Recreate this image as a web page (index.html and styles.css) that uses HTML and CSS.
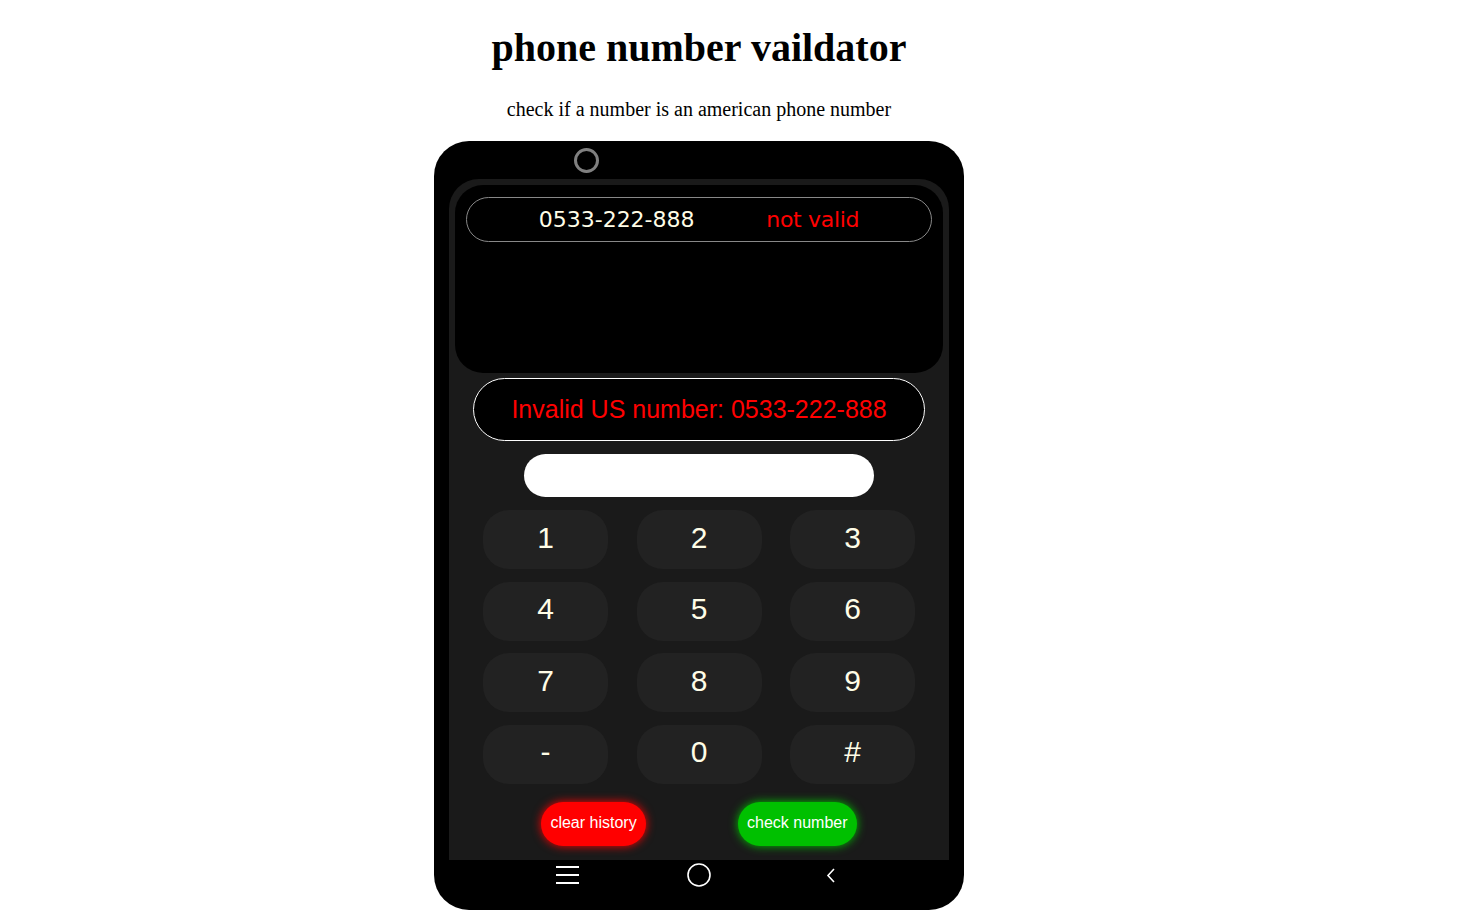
FILE: index.html
```html
<!DOCTYPE html>
<html lang="en">
<head>
    <link rel="stylesheet" href="styles.css">
</head>
<body>
    <div class="page">
        <h1>phone number vaildator</h1>
        <p class="subtitle">check if a number is an american phone number</p>

        <div class="phone">
            <div class="phone-top">
                <span class="camera"></span>
            </div>
            <div class="screen">
                <div class="history">
                    <div class="entry">
                        <span class="entry-num">0533-222-888</span>
                        <span class="entry-status">not valid</span>
                    </div>
                </div>
                <div class="result">Invalid US number: 0533-222-888</div>
                <input type="text" class="number-input" id="numberInput">
                <div class="keypad">
                    <button class="key">1</button>
                    <button class="key">2</button>
                    <button class="key">3</button>
                    <button class="key">4</button>
                    <button class="key">5</button>
                    <button class="key">6</button>
                    <button class="key">7</button>
                    <button class="key">8</button>
                    <button class="key">9</button>
                    <button class="key">-</button>
                    <button class="key">0</button>
                    <button class="key">#</button>
                </div>
                <div class="actions">
                    <button class="btn btn-clear">clear history</button>
                    <button class="btn btn-check">check number</button>
                </div>
            </div>
            <div class="nav-bar">
                <span class="nav-item">
                    <svg width="23" height="18" viewBox="0 0 23 18">
                        <path d="M0 1H23M0 9H23M0 17H23" stroke="#fff" stroke-width="2"/>
                    </svg>
                </span>
                <span class="nav-item">
                    <svg width="24" height="24" viewBox="0 0 24 24">
                        <circle cx="12" cy="12" r="11" fill="none" stroke="#fff" stroke-width="1.6"/>
                    </svg>
                </span>
                <span class="nav-item">
                    <svg width="10" height="15" viewBox="0 0 10 15">
                        <polyline points="8,1 2,7.5 8,14" fill="none" stroke="#fff" stroke-width="1.6"/>
                    </svg>
                </span>
            </div>
        </div>
    </div>
</body>
</html>
```

FILE: styles.css
```css
body {
    margin: 0;
    font-family: "Liberation Serif", "Times New Roman", serif;
    background-color: #fff;
}
.page {
    width: 1398px;
    text-align: center;
}
h1 {
    font-size: 40px;
    line-height: 46px;
    margin: 25px 0 0;
}
.subtitle {
    font-size: 20px;
    line-height: 23px;
    margin: 27px 0 0;
}
.phone {
    width: 530px;
    height: 769px;
    margin: 20px auto 0;
    padding: 0 15px;
    box-sizing: border-box;
    background-color: #000;
    border-radius: 35px;
    overflow: hidden;
}
.phone-top {
    height: 38px;
    display: flex;
    align-items: center;
    padding-left: 125px;
}
.camera {
    width: 25px;
    height: 25px;
    box-sizing: border-box;
    border: 3px solid #808080;
    border-radius: 50%;
}
.screen {
    height: 681px;
    box-sizing: border-box;
    padding: 6px;
    background-color: #1a1a1a;
    border-radius: 30px 30px 0 0;
    display: flex;
    flex-direction: column;
    align-items: center;
}
.history {
    width: 100%;
    height: 188px;
    box-sizing: border-box;
    padding: 12px 11px 0;
    background-color: #000;
    border-radius: 28px;
}
.entry {
    height: 45px;
    box-sizing: border-box;
    border: 1px solid #888;
    border-radius: 23px;
    display: flex;
    align-items: center;
    justify-content: space-evenly;
    font-family: "DejaVu Sans", Verdana, sans-serif;
}
.entry-num {
    font-size: 22px;
    color: #fffde7;
}
.entry-status {
    font-size: 22px;
    letter-spacing: -0.3px;
    color: #ff0000;
}
.result {
    width: 452px;
    height: 63px;
    margin-top: 5px;
    box-sizing: border-box;
    border: 1px solid #fff;
    border-radius: 32px;
    background-color: #000;
    color: #ff0000;
    font-family: "Liberation Sans", Arial, sans-serif;
    font-size: 25px;
    display: flex;
    align-items: center;
    justify-content: center;
}
.number-input {
    display: block;
    width: 350px;
    height: 43px;
    margin-top: 13px;
    box-sizing: border-box;
    border: none;
    border-radius: 22px;
    background-color: #fff;
    outline: none;
}
.keypad {
    margin-top: 13px;
    display: grid;
    grid-template-columns: repeat(3, 125px);
    grid-auto-rows: 59px;
    column-gap: 28.5px;
    row-gap: 12.5px;
}
.key {
    border: none;
    border-radius: 26px;
    background-color: #222;
    color: #fffde7;
    font-family: "Liberation Sans", Arial, sans-serif;
    font-size: 30px;
    padding: 0 0 4px;
    cursor: pointer;
}
.actions {
    align-self: stretch;
    margin: 18px -6px 0;
    display: flex;
    justify-content: space-evenly;
}
.btn {
    height: 44px;
    padding: 0 9px 2px;
    border: none;
    border-radius: 22px;
    color: #fff;
    font-family: "Liberation Sans", Arial, sans-serif;
    font-size: 16px;
    cursor: pointer;
}
.btn-clear {
    background-color: #ff0000;
    box-shadow: 0 0 10px #ff0000;
}
.btn-check {
    background-color: #00c000;
    box-shadow: 0 0 10px #00c000;
}
.nav-bar {
    height: 50px;
    padding-top: 3px;
    box-sizing: border-box;
    display: flex;
    justify-content: center;
}
.nav-item {
    width: 131.5px;
    height: 24px;
    display: flex;
    align-items: center;
    justify-content: center;
}
```
